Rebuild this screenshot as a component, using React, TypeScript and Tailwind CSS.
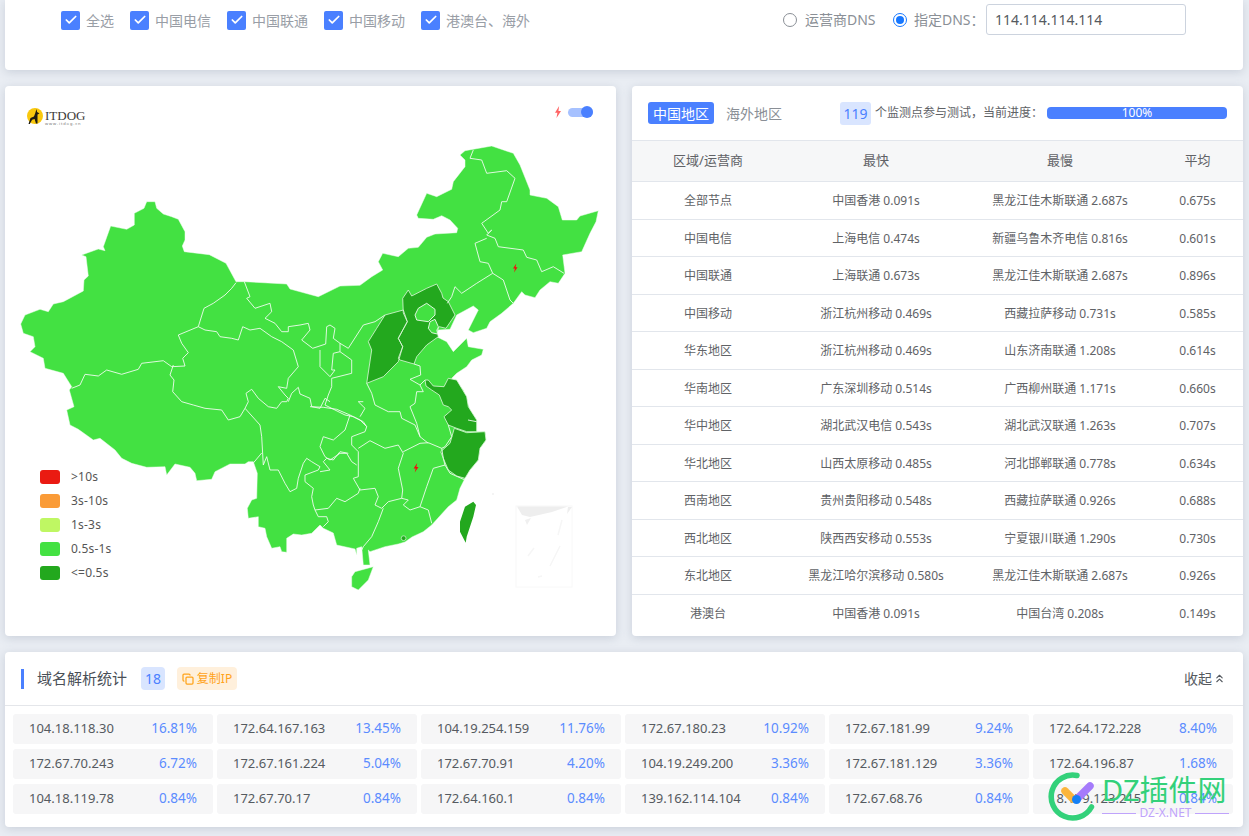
import { Check, ChevronsUp, Copy } from "lucide-react";

const regions = [
  ["全部节点", "中国香港 0.091s", "黑龙江佳木斯联通 2.687s", "0.675s"],
  ["中国电信", "上海电信 0.474s", "新疆乌鲁木齐电信 0.816s", "0.601s"],
  ["中国联通", "上海联通 0.673s", "黑龙江佳木斯联通 2.687s", "0.896s"],
  ["中国移动", "浙江杭州移动 0.469s", "西藏拉萨移动 0.731s", "0.585s"],
  ["华东地区", "浙江杭州移动 0.469s", "山东济南联通 1.208s", "0.614s"],
  ["华南地区", "广东深圳移动 0.514s", "广西柳州联通 1.171s", "0.660s"],
  ["华中地区", "湖北武汉电信 0.543s", "湖北武汉联通 1.263s", "0.707s"],
  ["华北地区", "山西太原移动 0.485s", "河北邯郸联通 0.778s", "0.634s"],
  ["西南地区", "贵州贵阳移动 0.548s", "西藏拉萨联通 0.926s", "0.688s"],
  ["西北地区", "陕西西安移动 0.553s", "宁夏银川联通 1.290s", "0.730s"],
  ["东北地区", "黑龙江哈尔滨移动 0.580s", "黑龙江佳木斯联通 2.687s", "0.926s"],
  ["港澳台", "中国香港 0.091s", "中国台湾 0.208s", "0.149s"],
];

const ips = [
  ["104.18.118.30", "16.81%"],
  ["172.64.167.163", "13.45%"],
  ["104.19.254.159", "11.76%"],
  ["172.67.180.23", "10.92%"],
  ["172.67.181.99", "9.24%"],
  ["172.64.172.228", "8.40%"],
  ["172.67.70.243", "6.72%"],
  ["172.67.161.224", "5.04%"],
  ["172.67.70.91", "4.20%"],
  ["104.19.249.200", "3.36%"],
  ["172.67.181.129", "3.36%"],
  ["172.64.196.87", "1.68%"],
  ["104.18.119.78", "0.84%"],
  ["172.67.70.17", "0.84%"],
  ["172.64.160.1", "0.84%"],
  ["139.162.114.104", "0.84%"],
  ["172.67.68.76", "0.84%"],
  ["18.179.123.215", "0.84%"],
];

const legend = [
  ["bg-[#ea1a12]", ">10s"],
  ["bg-[#fa9b37]", "3s-10s"],
  ["bg-[#bff763]", "1s-3s"],
  ["bg-[#43e142]", "0.5s-1s"],
  ["bg-[#23a81e]", "<=0.5s"],
];

const checks = ["全选", "中国电信", "中国联通", "中国移动", "港澳台、海外"];

// map coordinates are page pixels, the svg viewBox starts at the card corner
const mainland =
  "146.7,201.7 155,201.7 156.7,208.3 163.3,214 171.7,216.7 178.3,219.3 185,231.7 185,240 182.3,246 184.3,251.7 209.3,254.7 226,263.3 236,281.7 245,281.7 286.7,284 290,289 308.3,294 318.3,296.7 340,286 360,285.3 371.7,276.7 382.7,270 378.3,261.7 382.7,253.3 398.3,256.7 408.3,248.3 418.3,247.3 426.7,237.3 435,234 456.7,232.7 457.7,228.3 450,220 441.7,215.7 433.3,219.3 418.3,218.3 416.7,215 426.7,193.3 436.7,196.7 451.7,189.3 453.3,181.7 465,166.7 465,160 460,155 465,150.7 491.7,146 513.3,153.3 520,165 530,190 530,195 546.7,198.3 558.3,206.7 562.3,220 576.7,220 580,216 598.3,210.7 596,221.7 590,233.3 581.7,251.7 562.7,255 565,273.3 558.3,283.3 550,281.7 540,290 535,297.7 525,295 521.7,291.7 513.3,303.3 501.7,313.3 490,321.7 486.7,328.3 473.3,332.7 468.3,330 478.3,310 473.3,306 456.7,315 450,329.3 438.3,330 436.7,336.7 446.7,341.7 453.3,351.7 466.7,338.3 468.3,346.7 483.3,349.3 481.7,355 471.7,360 466.7,366.7 456.7,373.3 451.7,378.3 461.7,388.3 463.3,390 470,410 476.7,420 476.7,431.7 485,431.7 486,440 480,448.3 478.3,460 470,470 465,478.3 460,488.3 456.7,500 448.3,506.7 431.7,525 423.3,531.7 412,537 405,542 398.3,544 385,546.7 370,551.7 368.3,550 370,565 363.3,565 361.7,546.7 356.7,548.3 356.7,555 355,549 336.7,545 333.3,533 323.3,528.3 320,525 311.7,533.3 301.7,535 293.3,534 286.7,538.3 286.7,552.3 281.7,551.7 280,546.7 271.7,548.3 266.7,536.7 265,528.3 258.3,526.7 258.3,516.7 248.3,518.3 247.3,508.3 251.7,500 256.7,498.3 257.3,473.3 253.3,461.7 248.3,461.7 245,464 230,464 215,471.7 211.7,479.3 196.7,480.7 195,473.3 190,467.3 175,464 166.7,475 165,466.7 146.7,467.3 131.7,463.3 121.7,458.3 115,450 100,438.3 93.3,440 78.3,429.3 70,425 66.7,410 74,406.7 69.3,390 71.7,386.7 63.3,373.3 45,368.3 43.3,358.3 30,351.7 35,346.7 33.3,336.7 23.3,333.3 20.7,324 25,315 40,309.3 48.3,311.7 53.3,304 63.3,301.7 83.3,291 84,280 88.3,276 86,256.7 81.7,255 98.3,249 105,250.7 103.3,246.7 110.7,226 126.7,229.3 134.3,225 134.3,213.3 144,208.3";

const hainan = "355,571.7 373.3,566.7 368.3,580 358.3,590 351.7,586.7 351.7,576.7";
const taiwan = "473.3,501.7 476,505 473.3,516.7 466.7,536.7 465.7,542.7 460,531.7 460,521.7 465,506.7";

const darkAreas = [
  "385,315 403.3,310 407.3,321.7 398.3,338.3 402.7,346.7 398.3,361.7 383.3,376.7 366.7,383.3 371.7,350 368.3,341.7 376.7,328.3",
  "403.3,313 402.7,298.3 408.3,290 411.7,296 426.7,288.3 436.7,284 441.7,293.3 443,298 448.3,301.7 455,315 446,328.3 439.3,326.7 436.7,330 438.3,336.7 426.7,345 416.7,356.7 414,364 400,360 398.3,358.3 402.7,346.7 398.3,338.3 407.3,321.7",
  "425,380 428.3,380 433.3,386 444,386.7 448.3,378.3 456.7,380 466.7,396.7 468.3,406.7 476.7,420 476.7,431.7 466.7,431.7 456.7,428.3 448.3,425 444,416.7 451.7,410 448.3,406.7 443.3,405 439.3,395 431.7,390 426,386",
  "454.3,428.3 466.7,432.7 485,431.7 486,440 480,448.3 478.3,460 470,470 465,478.3 456.7,476 448.3,470 443.3,458.3 440.7,451.7 450,443.3",
];

const lightHoles = [
  "426.7,303.3 435,309.3 435,315 428.3,321.7 416.7,320 415,315 418.3,308.3",
  "430,321.7 435,319.3 438.3,326.7 437.3,334 431.7,332.7 428.3,328.3",
];

const borders = [
  "236,282.7 231.7,288.3 225,295 213.3,303.3 204,308.3 198.3,326.7 178.3,335 181.7,343.3 188.3,352.7 182.7,358.3 185,366 171.7,366.7 163.3,360.7 141.7,363.3 138.3,369.3 121.7,374.3 106.7,370 98.3,376 85,374.3 80,385 71.7,388.3",
  "173.3,365 170,375 174,380 172.7,391.7 181.7,401.7 193.3,405 205,408.3 221.7,410 228.3,420 240,416.7 245,408.3 248.3,401.7 246,393.3 251.7,389.3 258.3,398.3 268.3,406.7 276.7,408.3 281.7,401.7 286.7,401.7 288.3,398.3 285,395 278.3,386.7 286.7,388.3 288.3,378.3 298.3,366.7 293.3,350 281.7,341.7 271.7,336.7 260,328.3 250,330 242.7,326.7 238.3,340 231.7,338.3 220,336.7 216.7,331.7 205,330 198.3,326.7",
  "244.3,281.7 250,296.7 246.7,298.3 255,308.3 270,303.3 271.7,311.7 265,318.3 275,323.3 281.7,331.7 288.3,331.7 288.3,326.7 300,325 308.3,323.3 310,330 301.7,340 312.7,348.3 325.7,344 326.7,326.7 330,325 335,328.3 333.3,338.3 340,343.3 348.3,348.3 363.3,325 375,321.7 385,315",
  "320,350 320,366.7 330,376.7 335,370 331.7,370 333.3,353.3 340,351.7 340,343.3",
  "340,351.7 351.7,360 351.7,373.3 331.7,378.3 331.7,386.7 328.3,395 325,405 345,415 353.3,416.7 363.3,421.7 366.7,426.7",
  "366.7,383.3 371.7,393.3 375,405 388.3,411.7 400,411.7 401.7,418.3 415,425 420,436.7 428.3,443.3",
  "414,364 420,366 420.7,375 410,379.3 420,385 425,380",
  "420,385 423.3,391.7 416.7,391.7 415,403.3 410,406.7 416.7,423.3 420,436.7",
  "448.3,425 451.7,436.7 445,446.7 441.7,448.3",
  "363.3,401.7 358.3,401.7 365,408.3 360,416.7",
  "288.3,401.7 291.7,393.3 298.3,387.3 300,394 310,398.3 311.7,406.7 320,408.3 325,398.3 330,401.7",
  "310,406.7 323.3,407.3 336.7,409.3 350,415 360,420 366.7,426.7 365,431.7 351.7,436.7 351.7,445 358.3,451.7 358.3,476.7 353.3,478.3 360,490 375,488.3 378.3,496.7 375,505 381.7,508.3 388.3,501.7 401.7,498.3 402.7,490 398.3,468.3 403.3,453.3 398.3,445 385,448.3 370,440.7 358.3,448.3",
  "350,415 345,430 333.3,440 323.3,436.7 320,446.7 325,456.7 330,460 340,453.3 346.7,453.3 351.7,461.7 356.7,465",
  "403.3,451.7 420,443.3 428.3,442.7 441.7,448.3 443.3,458.3 445,465 433.3,468.3 426.7,486.7 420,506.7 410,510 403.3,505 408.3,500 401.7,498.3",
  "445,465 450,473.3 465,480",
  "420,506.7 428.3,510 431.7,523.3",
  "383.3,508.3 378.3,521.7 371.7,536.7 363.3,546.7 361.7,550",
  "315,510 328.3,508.3 336.7,498.3 345,501.7 358.3,493.3 360,488.3",
  "315,510 318.3,516.7 326.7,516.7 328.3,521.7 323.3,526.7",
  "315,510 313.3,505 311.7,496.7 313.3,488.3 305,481.7 305,475 318.3,470 320,466.7 311.7,461.7 306.7,458.3 303.3,463.3 298.3,478.3 296.7,488.3 290,491.7 285,483.3 278.3,470 270,470 266.7,456.7 263.3,465 261.7,436.7 260,425 245,408.3",
  "261.7,453 253.3,463",
  "320,471.7 330,470 323.3,461.7 326.7,458.3 333.3,460 340,451.7 348.3,453.3",
  "473.3,150 470,158.3 481.7,160 486.7,173.3 506.7,170.7 515,178.3 506.7,201.7 501.7,201.7 500,210 481.7,223.3 488.3,233.3 491.7,230 486.7,235 495,238.3 498.3,246.7 523.3,250 526.7,257.3 536.7,260 541.7,271.7 553.3,266.7 564,273.3",
  "486.7,238.3 475,243.3 480,261.7 488.3,263.3 492.7,273.3 476.7,283.3 461.7,293.3 455,286.7 451.7,296.7 447.3,303.3",
  "492.7,273.3 503.3,280 510,300 513.3,303.3",
  "468,420 476.7,421.7",
];

function Bolt({ className }: { className: string }) {
  return (
    <svg viewBox="0 0 10 16" className={className} fill="currentColor">
      <path d="M6.5 0 1 9h3.2L3 16l6-9.5H5.6L6.5 0Z" />
    </svg>
  );
}

function ChinaMap() {
  return (
    <svg viewBox="5 86 611 550" className="absolute inset-0 w-[611px] h-[550px]">
      <polygon points={mainland} fill="#43e142" stroke="#eefcee" strokeWidth="0.5" />
      <polygon points={hainan} fill="#43e142" stroke="#eefcee" strokeWidth="0.5" />
      {darkAreas.map((p, i) => (
        <polygon key={i} points={p} fill="#23a81e" />
      ))}
      {lightHoles.map((p, i) => (
        <polygon key={i} points={p} fill="#43e142" stroke="#eefcee" strokeWidth="0.9" />
      ))}
      <polygon points={taiwan} fill="#23a81e" />
      <circle cx="403.6" cy="538.2" r="2.4" fill="#23a81e" stroke="#eefcee" strokeWidth="0.6" />
      {borders.map((p, i) => (
        <polyline key={i} points={p} fill="none" stroke="#eefcee" strokeWidth="0.9" strokeLinejoin="round" />
      ))}
      {darkAreas.map((p, i) => (
        <polygon key={i} points={p} fill="none" stroke="#def7dc" strokeWidth="0.8" />
      ))}
      {/* south china sea inset */}
      <rect x="516" y="506" width="56" height="81" fill="none" stroke="#f8f8f8" strokeWidth="1" />
      <polygon points="517,506.5 568,506.5 552,512 530,517 522,515" fill="#eeeeee" />
      <polygon points="525,520 531,518 527,525" fill="#f0f0f0" />
      <polygon points="568,507 572,507 567,514" fill="#eeeeee" />
      <path d="M562 520 558 535M534 548 528 556M560 546 550 566M538 577 542 576" stroke="#f6f6f6" strokeWidth="1.5" fill="none" />
      <circle cx="493" cy="494" r="1" fill="#f0f0f0" />
      <path d="M516.3 263.5 513 268.6h2l-1 3.9 3.6-5.2h-2.1l.8-3.8Z" fill="#f20d0d" />
      <path d="M417.2 463 413.6 468.4h2.1l-1 4 3.8-5.4h-2.1l.8-4Z" fill="#f20d0d" />
    </svg>
  );
}

function Logo() {
  return (
    <div className="flex items-start h-[17px]">
      <svg viewBox="0 0 16 16" className="w-[16px] h-[16px]">
        <circle cx="8" cy="8" r="8" fill="#f9c80e" />
        <path d="M1.5 16 3.5 10 7 8.5 8.3 5 9.5 1l.6 3 2.4 1.6-2 1L10.5 15.5H9L7.6 11l-2.5.8L2.8 16Z" fill="#1d1a12" />
      </svg>
      <div className="ml-[2px] mt-[3px] flex flex-col leading-none text-[#3c3a38]">
        <span className="text-[13px] leading-[10px] [font-family:'Liberation_Serif',serif]">ITDOG</span>
        <span className="text-[4px] leading-[5px] tracking-[0.9px] text-[#777]">www.itdog.cn</span>
      </div>
    </div>
  );
}

export default function App() {
  return (
    <div className="relative w-[1249px] h-[836px] overflow-hidden bg-[#e9edf3] pl-[5px] pr-[6px] [font-family:'Noto_Sans','Noto_Sans_CJK_SC',sans-serif]">
      {/* filter card, its top is scrolled out of view */}
      <div className="h-[70px] bg-white rounded-b-[4px] shadow-[0_2px_10px_rgba(90,105,130,0.22)] flex items-start justify-between pl-[56px] pr-[57px] pt-[4px]">
        <div className="flex h-[32px] items-center">
          {checks.map((c) => (
            <label key={c} className="flex items-center mr-[16px] text-[14px] text-[#999ea6]">
              <span className="w-[19px] h-[19px] rounded-[2px] bg-[#4a80ff] flex items-center justify-center">
                <Check className="w-[14px] h-[14px] text-white" strokeWidth={3} />
              </span>
              <span className="ml-[6px]">{c}</span>
            </label>
          ))}
        </div>
        <div className="flex items-center h-[31px] text-[14px] text-[#8a8f96]">
          <span className="w-[14px] h-[14px] rounded-full border border-[#8a8f96] bg-white" />
          <span className="ml-[8px] w-[72px] mr-[16px] whitespace-nowrap">运营商DNS</span>
          <span className="w-[14px] h-[14px] rounded-full border border-[#1677ff] flex items-center justify-center">
            <span className="w-[8px] h-[8px] rounded-full bg-[#1677ff]" />
          </span>
          <span className="ml-[7px] w-[72px] whitespace-nowrap">指定DNS：</span>
          <div className="w-[200px] h-[31px] rounded-[3px] border border-[#ccd3de] pl-[8px] flex items-center text-[14px] text-[#555a60]">
            114.114.114.114
          </div>
        </div>
      </div>

      <div className="mt-[16px] grid grid-cols-[611px_611px] gap-x-[16px] h-[550px]">
        {/* map card */}
        <div className="relative bg-white rounded-[4px] shadow-[0_2px_10px_rgba(90,105,130,0.22)] overflow-hidden">
          <ChinaMap />
          <div className="relative flex items-center justify-between pl-[22px] pr-[23px] pt-[22px]">
            <Logo />
            <div className="flex items-center -mt-[9px]">
              <Bolt className="w-[8px] h-[12px] text-[#ff6464]" />
              <div className="relative ml-[6px] w-[25px] h-[9px] rounded-full bg-[#a6c1ff]">
                <span className="absolute -top-[1.5px] right-0 w-[12px] h-[12px] rounded-full bg-[#4a80ff]" />
              </div>
            </div>
          </div>
          <div className="absolute left-[35px] top-[384px] flex flex-col gap-[10px]">
            {legend.map(([color, label]) => (
              <div key={label} className="flex items-center h-[14px] text-[12px] text-[#555]">
                <span className={`w-[20px] h-[14px] rounded-[3px] ${color}`} />
                <span className="ml-[11px] tracking-[0.2px]">{label}</span>
              </div>
            ))}
          </div>
        </div>

        {/* table card */}
        <div className="bg-white rounded-[4px] shadow-[0_2px_10px_rgba(90,105,130,0.22)] overflow-hidden">
          <div className="h-[54px] flex items-center pl-[16px] pr-[16px] text-[14px]">
            <span className="w-[66px] h-[22px] rounded-[3px] bg-[#4a80ff] text-white flex items-center justify-center">中国地区</span>
            <span className="ml-[12px] text-[#8a8f96]">海外地区</span>
            <span className="ml-[58px] w-[31px] h-[23px] rounded-[3px] bg-[#d9e5ff] text-[#4a80ff] flex items-center justify-center">119</span>
            <span className="ml-[4px] text-[12px] text-[#606266] whitespace-nowrap w-[172px]">个监测点参与测试，当前进度：</span>
            <div className="w-[180px] h-[12px] rounded-[4px] bg-[#4a80ff] text-white text-[12px] leading-[12px] text-center">100%</div>
          </div>
          <div className="h-[42px] pb-[1px] grid grid-cols-[152px_184px_184px_91px] items-center text-center text-[13px] text-[#606266] bg-[#f6f7f8] border-y border-[#e2e6ec]">
            <div>区域/运营商</div>
            <div>最快</div>
            <div>最慢</div>
            <div>平均</div>
          </div>
          {regions.map((r) => (
            <div key={r[0] + r[3]} className="h-[37.5px] pt-[2px] grid grid-cols-[152px_184px_184px_91px] items-center text-center text-[12px] text-[#606266] border-b border-[#e2e6ec] last:border-b-0 whitespace-nowrap">
              {r.map((cell, i) => (
                <div key={i}>{cell}</div>
              ))}
            </div>
          ))}
        </div>
      </div>

      {/* resolved ip stats */}
      <div className="mt-[16px] h-[175px] bg-white rounded-[4px] shadow-[0_2px_10px_rgba(90,105,130,0.22)]">
        <div className="h-[54px] border-b border-[#e4e6ea] flex items-center pl-[16px] pr-[17px]">
          <span className="w-[3px] h-[20px] bg-[#4a80ff]" />
          <span className="ml-[13px] text-[15px] text-[#4a5057]">域名解析统计</span>
          <span className="ml-[14px] w-[24px] h-[23px] rounded-[4px] bg-[#d9e5ff] text-[#4a80ff] text-[14px] flex items-center justify-center">18</span>
          <span className="ml-[12px] w-[60px] h-[23px] rounded-[4px] bg-[#fff0dc] text-[#ffa31a] text-[12px] flex items-center justify-center gap-[3px]">
            <Copy className="w-[12px] h-[12px]" strokeWidth={2.5} />
            复制IP
          </span>
          <span className="ml-auto text-[14px] text-[#555a60] flex items-center">
            收起
            <ChevronsUp className="w-[13px] h-[13px] ml-[1px]" />
          </span>
        </div>
        <div className="pl-[8px] pt-[8px] grid grid-cols-[repeat(6,200px)] gap-x-[4px] gap-y-[5px]">
          {ips.map(([ip, pct]) => (
            <div key={ip} className="h-[30px] pb-[1px] rounded-[3px] bg-[#f6f6f7] px-[16px] flex items-center justify-between">
              <span className="text-[13px] text-[#555a60]">{ip}</span>
              <span className="text-[13.5px] text-[#5b8cff]">{pct}</span>
            </div>
          ))}
        </div>
      </div>

      {/* site watermark over the corner */}
      <div className="absolute left-[1048px] top-[771px] w-[184px] h-[62px] pointer-events-none">
        <svg viewBox="0 0 50 50" className="absolute left-0 top-[1px] w-[50px] h-[50px]">
          <path d="M29 3.5A21.5 21.5 0 1 0 43.5 35" fill="none" stroke="#33d17a" strokeWidth="5.5" strokeLinecap="round" />
          <path d="M17 19 25 27" stroke="#fbb53c" strokeWidth="7.5" strokeLinecap="round" />
          <path d="M30 26 42 14" stroke="#a57bfb" strokeWidth="7.5" strokeLinecap="round" />
          <circle cx="28.5" cy="27.5" r="4.5" fill="#1580f5" />
        </svg>
        <div className="absolute left-[54px] top-[0px] text-[29px] leading-[38px] text-[#33d17a] whitespace-nowrap">DZ插件网</div>
        <div className="absolute left-[54px] top-[36px] w-[127px] flex items-center gap-[3px]">
          <span className="flex-1 h-px bg-[#bfa3fb]" />
          <span className="text-[12px] leading-[12px] text-[#bfa3fb]">DZ-X.NET</span>
          <span className="flex-1 h-px bg-[#bfa3fb]" />
        </div>
      </div>
    </div>
  );
}
